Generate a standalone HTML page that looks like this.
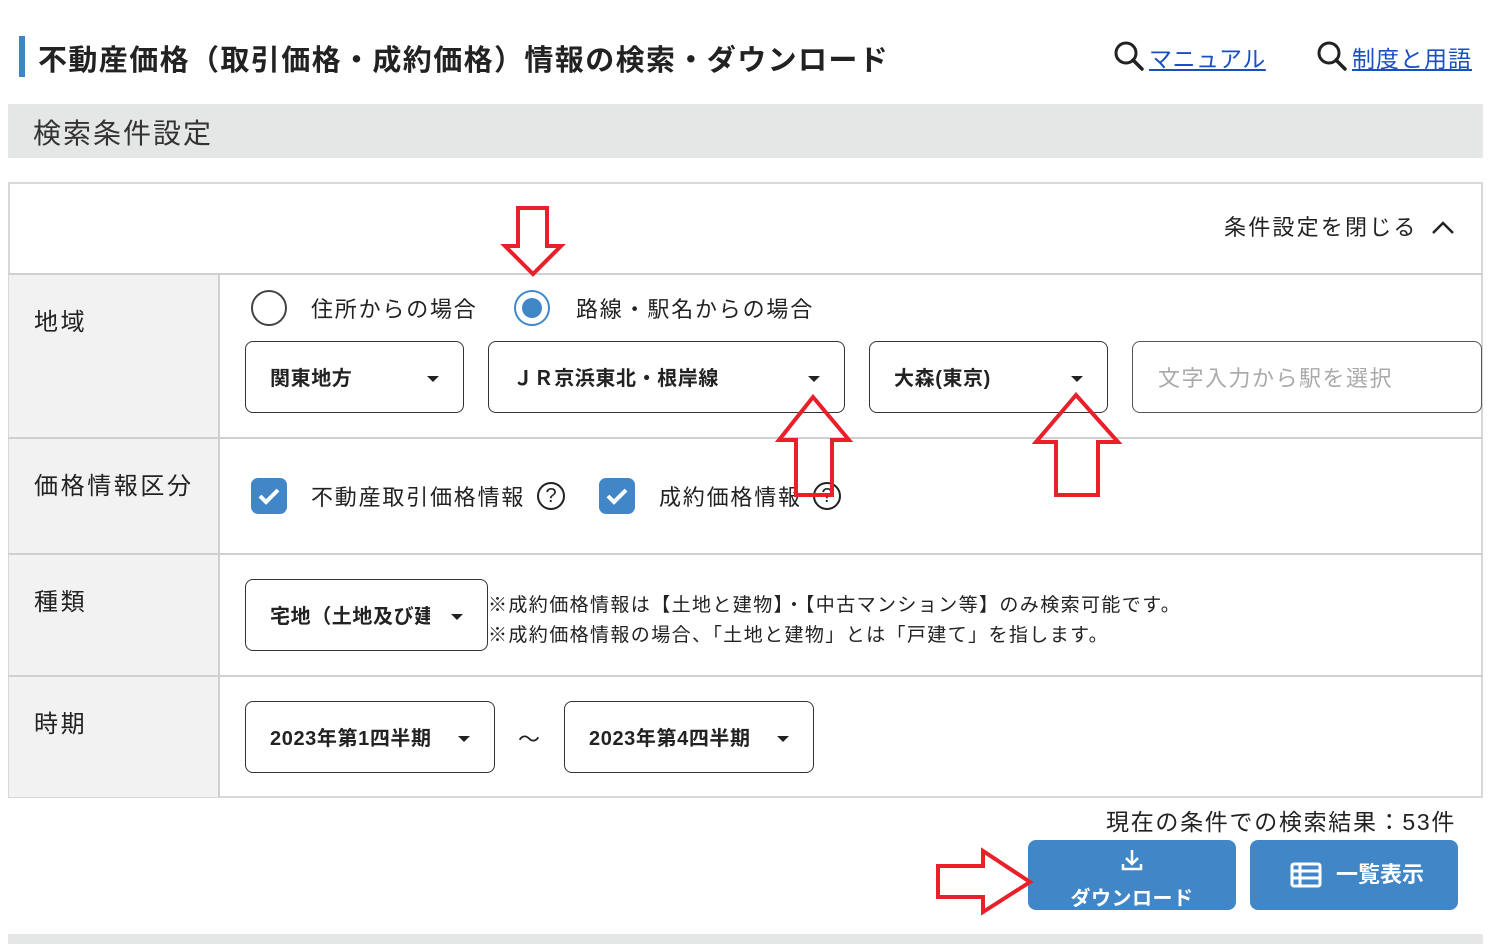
<!DOCTYPE html>
<html><head><meta charset="utf-8"><style>
*{box-sizing:border-box;margin:0;padding:0}
body{width:1503px;height:944px;background:#fff;position:relative;overflow:hidden;font-family:"Liberation Sans","Noto Sans CJK JP",sans-serif;color:#222}
.a{position:absolute}
.sel{position:absolute;border:1px solid #333;border-radius:8px;background:#fff;font-weight:bold;font-size:20px;line-height:70px;padding-left:24px;white-space:nowrap;overflow:hidden;letter-spacing:0.6px}
.sel:after{content:"";position:absolute;right:24px;top:34px;border-left:6px solid transparent;border-right:6px solid transparent;border-top:6px solid #222}
.lab{position:absolute;left:34px;font-size:24px;letter-spacing:2.6px}
.hl{position:absolute;left:8px;width:1475px;height:2px;background:#d0d0d0}
.cb{position:absolute;width:36px;height:36px;border-radius:7px;background:#4187c8}
.q{position:absolute;width:28px;height:28px;border:2px solid #222;border-radius:50%;font-size:20px;line-height:24px;text-align:center}
.t{position:absolute;font-size:22px;white-space:nowrap;letter-spacing:1.8px}
.btn{position:absolute;top:840px;height:70px;background:#4187c8;border-radius:8px;color:#fff;font-weight:bold}
</style></head><body>
<div class="a" style="left:19px;top:36px;width:6px;height:41px;background:#3d85c6"></div>
<div class="t" style="left:38px;top:37px;font-size:29px;font-weight:bold;letter-spacing:1.4px">不動産価格（取引価格・成約価格）情報の検索・ダウンロード</div>
<svg class="a" style="left:1113px;top:40px" width="32" height="32" viewBox="0 0 32 32"><circle cx="13" cy="13" r="10" fill="none" stroke="#222" stroke-width="3"/><path d="M20 20l9 9" stroke="#222" stroke-width="3.5" stroke-linecap="round"/></svg>
<div class="t" style="left:1149px;top:40px;font-size:23px;letter-spacing:0.5px;color:#1a4fc4;text-decoration:underline">マニュアル</div>
<svg class="a" style="left:1316px;top:40px" width="32" height="32" viewBox="0 0 32 32"><circle cx="13" cy="13" r="10" fill="none" stroke="#222" stroke-width="3"/><path d="M20 20l9 9" stroke="#222" stroke-width="3.5" stroke-linecap="round"/></svg>
<div class="t" style="left:1352px;top:40px;font-size:23px;letter-spacing:1px;color:#1a4fc4;text-decoration:underline">制度と用語</div>
<div class="a" style="left:8px;top:104px;width:1475px;height:54px;background:#e5e6e6"></div>
<div class="t" style="left:33px;top:112px;font-size:28px;letter-spacing:2px;color:#333">検索条件設定</div>

<div class="a" style="left:8px;top:182px;width:1475px;height:616px;border:2px solid #d8d8d8"></div>
<div class="a" style="left:9px;top:274px;width:211px;height:523px;background:#f2f2f2;border-right:2px solid #d0d0d0"></div>
<div class="hl" style="top:273px"></div>
<div class="hl" style="top:437px"></div>
<div class="hl" style="top:553px"></div>
<div class="hl" style="top:675px"></div>
<div class="t" style="left:1224px;top:210px;font-size:22px;letter-spacing:2.2px">条件設定を閉じる</div>
<svg class="a" style="left:1430px;top:218px" width="26" height="20"><path d="M3 15l10-10 10 10" fill="none" stroke="#222" stroke-width="2.5"/></svg>

<div class="lab" style="top:302px">地域</div>
<div class="lab" style="top:466px">価格情報区分</div>
<div class="lab" style="top:582px">種類</div>
<div class="lab" style="top:704px">時期</div>

<div class="a" style="left:251px;top:290px;width:36px;height:36px;border:2px solid #444;border-radius:50%"></div>
<div class="t" style="left:311px;top:292px">住所からの場合</div>
<div class="a" style="left:514px;top:290px;width:36px;height:36px;border:2px solid #4187c8;border-radius:50%"></div>
<div class="a" style="left:522px;top:298px;width:20px;height:20px;background:#4187c8;border-radius:50%"></div>
<div class="t" style="left:576px;top:292px">路線・駅名からの場合</div>

<div class="sel" style="left:245px;top:341px;width:219px;height:72px;line-height:74px">関東地方</div>
<div class="sel" style="left:488px;top:341px;width:357px;height:72px;line-height:74px">ＪＲ京浜東北・根岸線</div>
<div class="sel" style="left:869px;top:341px;width:239px;height:72px;line-height:74px">大森(東京)</div>
<div class="a" style="left:1132px;top:341px;width:350px;height:72px;border:1px solid #555;border-radius:8px;font-size:22px;letter-spacing:1.5px;color:#aaa;line-height:74px;padding-left:25px">文字入力から駅を選択</div>

<div class="cb" style="left:251px;top:478px"></div>
<svg class="a" style="left:251px;top:478px" width="36" height="36"><path d="M9 18l6 6 12-12" fill="none" stroke="#fff" stroke-width="4"/></svg>
<div class="t" style="left:311px;top:480px">不動産取引価格情報</div>
<div class="q" style="left:537px;top:482px">?</div>
<div class="cb" style="left:599px;top:478px"></div>
<svg class="a" style="left:599px;top:478px" width="36" height="36"><path d="M9 18l6 6 12-12" fill="none" stroke="#fff" stroke-width="4"/></svg>
<div class="t" style="left:659px;top:480px">成約価格情報</div>
<div class="q" style="left:813px;top:482px">?</div>

<div class="sel" style="left:245px;top:579px;width:243px;height:72px;line-height:74px"><div style="width:160px;overflow:hidden">宅地（土地及び建物）</div></div>
<div class="t" style="left:488px;top:590px;font-size:19px;letter-spacing:1.4px">※成約価格情報は【土地と建物】・【中古マンション等】のみ検索可能です。</div>
<div class="t" style="left:488px;top:620px;font-size:19px;letter-spacing:1.4px">※成約価格情報の場合、「土地と建物」とは「戸建て」を指します。</div>

<div class="sel" style="left:245px;top:701px;width:250px;height:72px;line-height:74px">2023年第1四半期</div>
<div class="t" style="left:518px;top:722px">～</div>
<div class="sel" style="left:564px;top:701px;width:250px;height:72px;line-height:74px">2023年第4四半期</div>

<div class="t" style="left:1106px;top:803px;font-size:23px;letter-spacing:1.7px">現在の条件での検索結果：53件</div>
<div class="btn" style="left:1028px;width:208px">
<svg class="a" style="left:92px;top:8px" width="24" height="24"><path d="M12 2v13M6 10l6 6 6-6M3 16v5h18v-5" fill="none" stroke="#fff" stroke-width="2.5"/></svg>
<div class="a" style="left:0;width:100%;top:46px;text-align:center;font-size:20px;line-height:26px;letter-spacing:0.5px">ダウンロード</div></div>
<div class="btn" style="left:1250px;width:208px">
<svg class="a" style="left:40px;top:22px" width="32" height="26"><rect x="2" y="2" width="28" height="22" rx="2" fill="none" stroke="#fff" stroke-width="3"/><path d="M2 9h28M2 16h28M10 2v22" stroke="#fff" stroke-width="3"/></svg>
<div class="a" style="left:86px;top:20px;font-size:22px;line-height:30px">一覧表示</div></div>
<div class="a" style="left:8px;top:934px;width:1475px;height:10px;background:#e5e6e6"></div>

<svg class="a" style="left:0;top:0" width="1503" height="944" fill="none" stroke="#e8202a" stroke-width="4">
<path d="M518 208h29v38h14l-28 28-28-28h13z"/>
<path d="M813 397l36 43h-17v55h-36v-55h-17z"/>
<path d="M1076 395l42 47h-20v53h-42v-53h-20z"/>
<path d="M938 866h45v-15l47 31-47 30v-15h-45z"/>
</svg>
</body></html>
